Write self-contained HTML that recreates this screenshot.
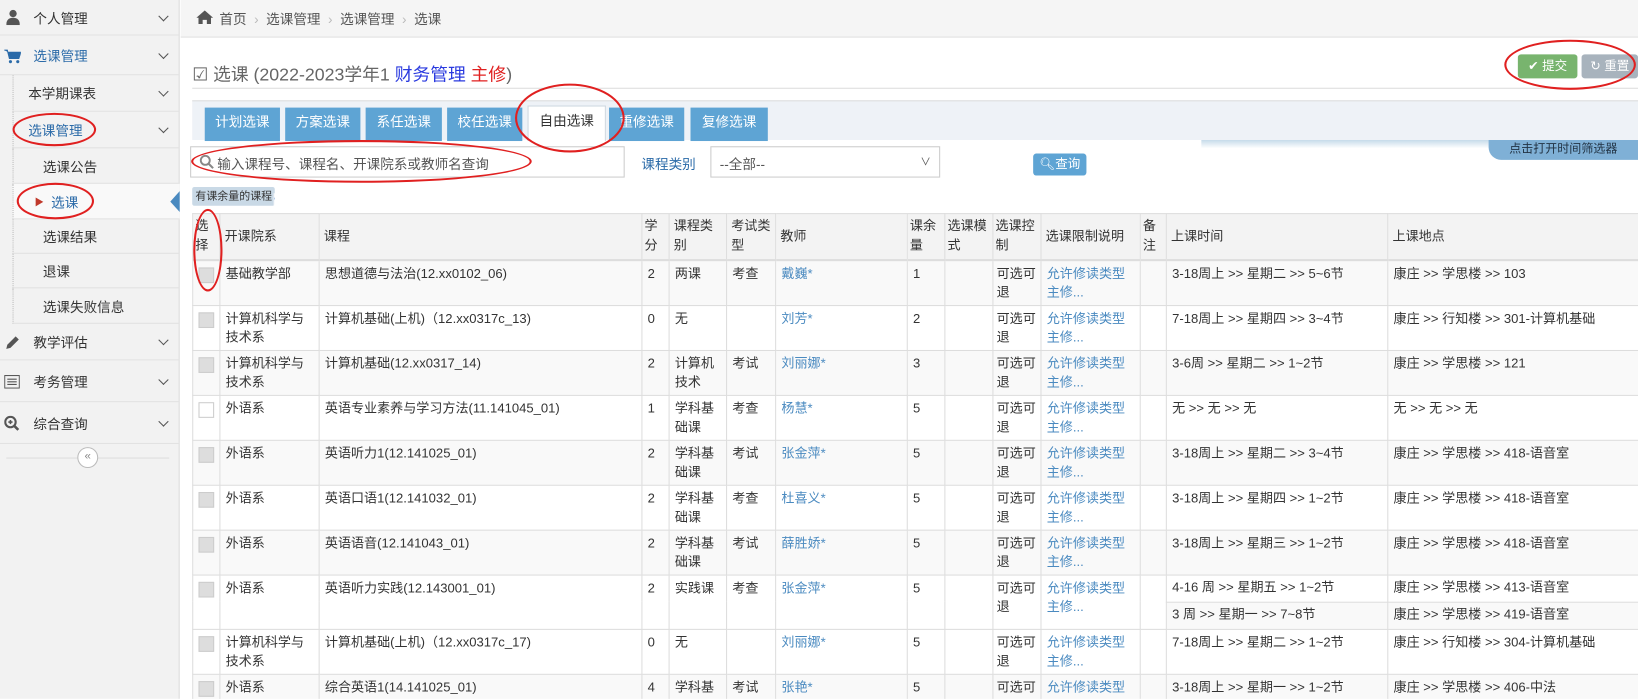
<!DOCTYPE html>
<html><head><meta charset="utf-8"><style>
*{box-sizing:border-box;margin:0;padding:0}
html,body{width:1638px;height:699px;overflow:hidden;background:#fff}
body{font-family:"Liberation Sans","Noto Sans CJK SC",sans-serif;font-size:13px;color:#333}
#w{position:absolute;left:0;top:0;width:1568px;height:669px;transform:scale(1.04464);transform-origin:0 0;overflow:hidden}
.a{position:absolute}
#side{left:0;top:0;width:172px;height:669px;background:#f2f2f2;border-right:1px solid #ddd}
.si{position:absolute;left:0;width:172px;border-bottom:1px solid #e2e2e2;font-size:13px;color:#333}
.si span{position:absolute;top:50%;transform:translateY(-50%)}
.chev{position:absolute;right:12px;top:50%;width:7px;height:7px;border-right:1.5px solid #555;border-bottom:1.5px solid #555;transform:translateY(-70%) rotate(45deg)}
.ell{position:absolute;border:2px solid #e02020;border-radius:50%}
table{border-collapse:collapse;table-layout:fixed;position:absolute;left:184px;top:204px;width:1384px;font-size:12.5px}
td,th{border:1px solid #ddd;vertical-align:top;padding:3px 1px 3px 5px;line-height:18px;font-weight:normal;text-align:left;overflow:hidden;white-space:nowrap}
th{background:#f3f3f3;vertical-align:middle;height:44px;border-bottom:2px solid #ddd;white-space:nowrap;line-height:19px;padding:2px 0 2px 4px}
td{height:43px}
tr.o td{background:#f9f9f9}
.l{color:#4a8ac0}
.cb{display:inline-block;width:15px;height:15px;background:#ddd;border:1px solid #ccc;margin-top:3px}
.cb.w{background:#fff}
.tab{position:absolute;top:103px;height:32px;background:#5ea4d4;color:#fff;text-align:center;line-height:28px;font-size:13px}
</style></head><body><div id="w">
<div id="side" class="a">
<div class="si" style="top:0;height:34px"><svg class="a" style="left:6px;top:9px" width="13" height="15" viewBox="0 0 13 15"><circle cx="6.5" cy="4" r="3.5" fill="#555"/><path d="M0 15 Q0 8 6.5 8 Q13 8 13 15Z" fill="#555"/></svg><span style="left:32px">个人管理</span><i class="chev"></i></div>
<div class="si" style="top:34px;height:38px;color:#2a6aa8"><svg class="a" style="left:4px;top:13px" width="16" height="14" viewBox="0 0 16 14"><path d="M0 1h3l2 8h9l2-6H4" fill="#2a6aa8" stroke="#2a6aa8"/><circle cx="6" cy="12" r="1.5" fill="#2a6aa8"/><circle cx="13" cy="12" r="1.5" fill="#2a6aa8"/></svg><span style="left:32px">选课管理</span><i class="chev"></i></div>
<div class="si" style="top:72px;height:35px;left:12px;width:160px;border-left:1px dotted #bbb"><span style="left:14px">本学期课表</span><i class="chev"></i></div>
<div class="si" style="top:107px;height:35px;left:12px;width:160px;color:#2a6aa8;border-left:1px dotted #bbb"><span style="left:14px">选课管理</span><i class="chev"></i></div>
<div class="si" style="top:142px;height:34px;left:12px;width:160px;border-left:1px dotted #bbb"><span style="left:28px">选课公告</span></div>
<div class="si" style="top:176px;height:34px;left:12px;width:160px;background:#f9f9f9;color:#2a6aa8;border-left:1px dotted #bbb"><span style="left:20px;color:#c0392b;font-size:9px">▶</span><span style="left:36px">选课</span></div>
<div class="si" style="top:210px;height:33px;left:12px;width:160px;border-left:1px dotted #bbb"><span style="left:28px">选课结果</span></div>
<div class="si" style="top:243px;height:33px;left:12px;width:160px;border-left:1px dotted #bbb"><span style="left:28px">退课</span></div>
<div class="si" style="top:276px;height:34px;left:12px;width:160px;border-left:1px dotted #bbb"><span style="left:28px">选课失败信息</span></div>
<div class="si" style="top:310px;height:35px"><svg class="a" style="left:5px;top:11px" width="14" height="14" viewBox="0 0 14 14"><path d="M1 13l1-4 8-8 3 3-8 8z" fill="#555"/></svg><span style="left:32px">教学评估</span><i class="chev"></i></div>
<div class="si" style="top:345px;height:40px"><svg class="a" style="left:4px;top:14px" width="15" height="13" viewBox="0 0 15 13"><rect x=".5" y=".5" width="14" height="12" fill="none" stroke="#555"/><path d="M3 4h9M3 6.5h9M3 9h9" stroke="#555"/></svg><span style="left:32px">考务管理</span><i class="chev"></i></div>
<div class="si" style="top:385px;height:40px"><svg class="a" style="left:4px;top:13px" width="15" height="15" viewBox="0 0 15 15"><circle cx="6" cy="6" r="5" fill="none" stroke="#555" stroke-width="2"/><path d="M9.5 9.5l4 4" stroke="#555" stroke-width="2.5"/><path d="M4 6h4M6 4v4" stroke="#555" stroke-width="1.5"/></svg><span style="left:32px">综合查询</span><i class="chev"></i></div>
<div class="a" style="left:6px;top:438px;width:156px;border-top:1px solid #ddd"></div>
<div class="a" style="left:74px;top:428px;width:20px;height:20px;border-radius:50%;border:1px solid #bbb;background:#fff;font-size:11px;line-height:17px;text-align:center;color:#888">«</div>
</div>
<div class="a" style="left:163px;top:183px;width:0;height:0;border-top:10px solid transparent;border-bottom:10px solid transparent;border-right:9px solid #4a8ac0"></div>
<div class="a" style="left:173px;top:0;width:1395px;height:36px;background:#f5f5f5;border-bottom:1px solid #e2e2e2"></div>
<svg class="a" style="left:188px;top:10px" width="16" height="13" viewBox="0 0 16 13"><path d="M8 0L0 7h2v6h4V9h4v4h4V7h2z" fill="#555"/></svg>
<div class="a" style="left:210px;top:8px;color:#555">首页 <span style="color:#bbb">&nbsp;›&nbsp;</span> 选课管理 <span style="color:#bbb">&nbsp;›&nbsp;</span> 选课管理 <span style="color:#bbb">&nbsp;›&nbsp;</span> 选课</div>
<div class="a" style="left:184px;top:57px;font-size:17px;color:#666">☑ 选课 (2022-2023学年1 <span style="color:#2a3adf">财务管理</span> <span style="color:#e02020">主修</span>)</div>
<div class="a" style="left:184px;top:84px;width:1384px;border-top:1px solid #ddd"></div>
<div class="a" style="left:1453px;top:52px;width:57px;height:23px;background:#78b46e;border-radius:3px;color:#fff;font-size:12px;line-height:23px;text-align:center">✔ 提交</div>
<div class="a" style="left:1514px;top:52px;width:54px;height:23px;background:#a8b3bd;border-radius:3px;color:#fff;font-size:12px;line-height:23px;text-align:center">↻ 重置</div>
<div class="a" style="left:184px;top:96px;width:1384px;height:38px;background:#eef2f7;border-top:1px solid #ddd"></div>
<div class="tab" style="left:196px;width:72px">计划选课</div>
<div class="tab" style="left:273px;width:72px">方案选课</div>
<div class="tab" style="left:350px;width:73px">系任选课</div>
<div class="tab" style="left:428px;width:72px">校任选课</div>
<div class="tab" style="left:505px;width:75px;background:#fff;color:#333;border:1px solid #cfd8e0;border-bottom:none;top:101px;height:34px">自由选课</div>
<div class="tab" style="left:583px;width:72px">重修选课</div>
<div class="tab" style="left:661px;width:74px">复修选课</div>
<div class="a" style="left:1150px;top:134px;width:280px;height:8px;background:linear-gradient(#c6dbea,#fff)"></div>
<div class="a" style="left:1425px;top:134px;width:143px;height:19px;background:#7fb0d6;border-radius:0 0 0 12px;font-size:11.5px;line-height:19px;color:#234;text-align:center">点击打开时间筛选器</div>
<div class="a" style="left:182px;top:140px;width:416px;height:30px;border:1px solid #ccc;background:#fff"></div>
<svg class="a" style="left:191px;top:148px" width="14" height="14" viewBox="0 0 14 14"><circle cx="5.5" cy="5.5" r="4.3" fill="none" stroke="#888" stroke-width="1.8"/><path d="M8.5 8.5l4.5 4.5" stroke="#888" stroke-width="2"/></svg>
<div class="a" style="left:208px;top:147px;color:#555">输入课程号、课程名、开课院系或教师名查询</div>
<div class="a" style="left:614px;top:147px;color:#2a6aa8">课程类别</div>
<div class="a" style="left:680px;top:140px;width:220px;height:30px;border:1px solid #ccc;background:#fff;color:#555;padding:6px 8px">--全部--<span style="position:absolute;right:8px;top:5px;font-size:10px">∨</span></div>
<div class="a" style="left:989px;top:147px;width:51px;height:21px;background:#5ea4d4;border-radius:3px;color:#fff;font-size:12px;line-height:21px;text-align:center">🔍︎查询</div>
<div class="a" style="left:184px;top:179px;width:79px;height:18px;background:#c9d9e6;border-radius:2px;font-size:10.5px;line-height:18px;padding-left:3px;color:#333;white-space:nowrap;overflow:hidden">有课余量的课程<span style="display:inline-block;width:12px;height:12px;background:#fff;color:#3a7ac0;line-height:12px;margin-left:1px;font-size:10px;vertical-align:-2px">✔</span></div>
<table>
<colgroup><col style="width:26px"><col style="width:95px"><col style="width:309px"><col style="width:26px"><col style="width:55px"><col style="width:47px"><col style="width:126px"><col style="width:36px"><col style="width:46px"><col style="width:46px"><col style="width:95px"><col style="width:25px"><col style="width:212px"><col style="width:240px"></colgroup>
<tr><th style="padding:0 2px">选<br>择</th><th>开课院系</th><th>课程</th><th style="padding:0 2px">学<br>分</th><th>课程类<br>别</th><th>考试类<br>型</th><th>教师</th><th style="padding:2px 0 2px 2px">课余<br>量</th><th style="padding:2px 0 2px 2px">选课模<br>式</th><th style="padding:2px 0 2px 2px">选课控<br>制</th><th>选课限制说明</th><th style="padding:0 2px">备<br>注</th><th>上课时间</th><th>上课地点</th></tr>
<tr class="o"><td><i class="cb"></i></td><td>基础教学部</td><td>思想道德与法治(12.xx0102_06)</td><td>2</td><td>两课</td><td>考查</td><td class="l">戴巍*</td><td>1</td><td></td><td style="padding-left:3px">可选可<br>退</td><td class="l">允许修读类型<br>主修...</td><td></td><td>3-18周上 &gt;&gt; 星期二 &gt;&gt; 5~6节</td><td>康庄 &gt;&gt; 学思楼 &gt;&gt; 103</td></tr>
<tr><td><i class="cb"></i></td><td>计算机科学与<br>技术系</td><td>计算机基础(上机)（12.xx0317c_13)</td><td>0</td><td>无</td><td></td><td class="l">刘芳*</td><td>2</td><td></td><td style="padding-left:3px">可选可<br>退</td><td class="l">允许修读类型<br>主修...</td><td></td><td>7-18周上 &gt;&gt; 星期四 &gt;&gt; 3~4节</td><td>康庄 &gt;&gt; 行知楼 &gt;&gt; 301-计算机基础</td></tr>
<tr class="o"><td><i class="cb"></i></td><td>计算机科学与<br>技术系</td><td>计算机基础(12.xx0317_14)</td><td>2</td><td>计算机<br>技术</td><td>考试</td><td class="l">刘丽娜*</td><td>3</td><td></td><td style="padding-left:3px">可选可<br>退</td><td class="l">允许修读类型<br>主修...</td><td></td><td>3-6周 &gt;&gt; 星期二 &gt;&gt; 1~2节</td><td>康庄 &gt;&gt; 学思楼 &gt;&gt; 121</td></tr>
<tr><td><i class="cb w"></i></td><td>外语系</td><td>英语专业素养与学习方法(11.141045_01)</td><td>1</td><td>学科基<br>础课</td><td>考查</td><td class="l">杨慧*</td><td>5</td><td></td><td style="padding-left:3px">可选可<br>退</td><td class="l">允许修读类型<br>主修...</td><td></td><td>无 &gt;&gt; 无 &gt;&gt; 无</td><td>无 &gt;&gt; 无 &gt;&gt; 无</td></tr>
<tr class="o"><td><i class="cb"></i></td><td>外语系</td><td>英语听力1(12.141025_01)</td><td>2</td><td>学科基<br>础课</td><td>考试</td><td class="l">张金萍*</td><td>5</td><td></td><td style="padding-left:3px">可选可<br>退</td><td class="l">允许修读类型<br>主修...</td><td></td><td>3-18周上 &gt;&gt; 星期二 &gt;&gt; 3~4节</td><td>康庄 &gt;&gt; 学思楼 &gt;&gt; 418-语音室</td></tr>
<tr><td><i class="cb"></i></td><td>外语系</td><td>英语口语1(12.141032_01)</td><td>2</td><td>学科基<br>础课</td><td>考查</td><td class="l">杜喜义*</td><td>5</td><td></td><td style="padding-left:3px">可选可<br>退</td><td class="l">允许修读类型<br>主修...</td><td></td><td>3-18周上 &gt;&gt; 星期四 &gt;&gt; 1~2节</td><td>康庄 &gt;&gt; 学思楼 &gt;&gt; 418-语音室</td></tr>
<tr class="o"><td><i class="cb"></i></td><td>外语系</td><td>英语语音(12.141043_01)</td><td>2</td><td>学科基<br>础课</td><td>考试</td><td class="l">薛胜娇*</td><td>5</td><td></td><td style="padding-left:3px">可选可<br>退</td><td class="l">允许修读类型<br>主修...</td><td></td><td>3-18周上 &gt;&gt; 星期三 &gt;&gt; 1~2节</td><td>康庄 &gt;&gt; 学思楼 &gt;&gt; 418-语音室</td></tr>
<tr><td rowspan="2"><i class="cb"></i></td><td rowspan="2">外语系</td><td rowspan="2">英语听力实践(12.143001_01)</td><td rowspan="2">2</td><td rowspan="2">实践课</td><td rowspan="2">考查</td><td rowspan="2" class="l">张金萍*</td><td rowspan="2">5</td><td rowspan="2"></td><td rowspan="2" style="padding-left:3px">可选可<br>退</td><td rowspan="2" class="l">允许修读类型<br>主修...</td><td rowspan="2"></td><td style="height:26px;padding-top:2px">4-16 周 &gt;&gt; 星期五 &gt;&gt; 1~2节</td><td style="height:26px;padding-top:2px">康庄 &gt;&gt; 学思楼 &gt;&gt; 413-语音室</td></tr>
<tr><td style="height:26px;padding-top:2px;background:#f9f9f9">3 周 &gt;&gt; 星期一 &gt;&gt; 7~8节</td><td style="height:26px;padding-top:2px;background:#f9f9f9">康庄 &gt;&gt; 学思楼 &gt;&gt; 419-语音室</td></tr>
<tr><td><i class="cb"></i></td><td>计算机科学与<br>技术系</td><td>计算机基础(上机)（12.xx0317c_17)</td><td>0</td><td>无</td><td></td><td class="l">刘丽娜*</td><td>5</td><td></td><td style="padding-left:3px">可选可<br>退</td><td class="l">允许修读类型<br>主修...</td><td></td><td>7-18周上 &gt;&gt; 星期二 &gt;&gt; 1~2节</td><td>康庄 &gt;&gt; 行知楼 &gt;&gt; 304-计算机基础</td></tr>
<tr class="o"><td><i class="cb"></i></td><td>外语系</td><td>综合英语1(14.141025_01)</td><td>4</td><td>学科基<br>础课</td><td>考试</td><td class="l">张艳*</td><td>5</td><td></td><td style="padding-left:3px">可选可<br>退</td><td class="l">允许修读类型<br>主修...</td><td></td><td>3-18周上 &gt;&gt; 星期一 &gt;&gt; 1~2节</td><td>康庄 &gt;&gt; 学思楼 &gt;&gt; 406-中法</td></tr>
</table>
<div class="ell" style="left:12px;top:108px;width:80px;height:32px"></div>
<div class="ell" style="left:16px;top:175px;width:74px;height:35px"></div>
<div class="ell" style="left:493px;top:80px;width:105px;height:66px"></div>
<div class="ell" style="left:183px;top:134px;width:326px;height:41px"></div>
<div class="ell" style="left:185px;top:200px;width:28px;height:79px"></div>
<div class="ell" style="left:1440px;top:38px;width:126px;height:48px"></div>
</div></body></html>
